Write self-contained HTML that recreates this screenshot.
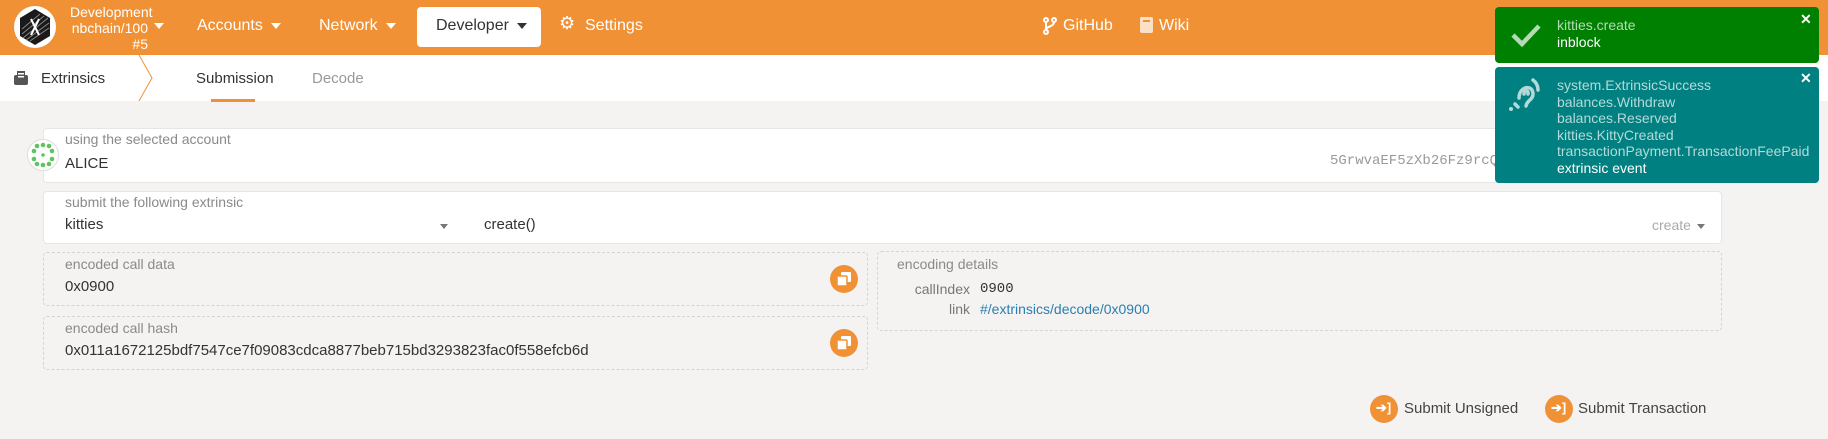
<!DOCTYPE html>
<html><head><meta charset="utf-8"><style>
*{box-sizing:border-box;margin:0;padding:0}
body{width:1828px;height:439px;overflow:hidden;background:#f4f3f2;font-family:"Liberation Sans",sans-serif;color:#4e4e4e;position:relative}
.a{position:absolute;white-space:nowrap}
.top{position:absolute;left:0;top:0;width:1828px;height:55px;background:#f19135}
.nav{color:#fff;font-size:16px}
.sub{position:absolute;left:0;top:55px;width:1828px;height:46px;background:#fff}
.box{position:absolute;background:#fff;border:1px solid #e6e6e6;border-radius:4px}
.dash{position:absolute;border:1px dashed #d4d4d4;border-radius:4px}
.lbl{font-size:14px;color:#8a8a8a}
.val{font-size:15px;color:#333}
.mono{font-family:"Liberation Mono",monospace}
.btn{position:absolute;width:28px;height:28px;border-radius:50%;background:#f19135}
.tri{display:inline-block;width:0;height:0;border-left:5px solid transparent;border-right:5px solid transparent;border-top:6px solid currentColor;vertical-align:middle;margin-left:8px}
</style></head><body>
<div class="top"></div>
<svg class="a" style="left:14px;top:6px" width="42" height="42" viewBox="0 0 42 42"><circle cx="21" cy="21" r="21" fill="#fff"/><polygon points="21,3 36,12 36,30 21,39 6,30 6,12" fill="#1a1a1a"/><g stroke="#888" stroke-width="1"><line x1="8" y1="28" x2="30" y2="10"/><line x1="9" y1="32" x2="34" y2="12"/><line x1="12" y1="34" x2="35" y2="17"/><line x1="16" y1="35" x2="35" y2="22"/><line x1="8" y1="23" x2="26" y2="8"/></g><path d="M17 13 L25 29 M25 13 L17 29" stroke="#fff" stroke-width="2"/></svg>
<div class="a nav" style="left:70px;top:4px;font-size:14px;line-height:16px;text-align:right;width:78px">Development<br>nbchain/100<br>#5</div>
<div class="a nav" style="left:150px;top:17px;font-size:14px"><span class="tri" style="margin-left:4px"></span></div>
<div class="a nav" style="left:197px;top:17px">Accounts<span class="tri"></span></div>
<div class="a nav" style="left:319px;top:17px">Network<span class="tri"></span></div>
<div class="a" style="left:417px;top:7px;width:124px;height:40px;background:#fff;border-radius:4px"></div>
<div class="a" style="left:436px;top:17px;font-size:16px;color:#333">Developer<span class="tri"></span></div>
<div class="a nav" style="left:559px;top:13px;font-size:18px">⚙</div>
<div class="a nav" style="left:585px;top:17px">Settings</div>
<svg class="a" style="left:1043px;top:17px" width="14" height="18" viewBox="0 0 14 18"><g fill="none" stroke="#fff" stroke-width="2"><circle cx="3" cy="3" r="2"/><circle cx="11" cy="3" r="2"/><circle cx="3" cy="15" r="2"/><path d="M3 5v8M11 5c0 5-8 4-8 8"/></g></svg>
<div class="a nav" style="left:1063px;top:17px">GitHub</div>
<svg class="a" style="left:1140px;top:17px" width="13" height="16"><rect x="0" y="0" width="13" height="16" rx="2" fill="#fbe0c6"/><rect x="3" y="3" width="7" height="2" fill="#f19135"/></svg>
<div class="a nav" style="left:1159px;top:17px">Wiki</div>

<div class="sub"></div>
<svg class="a" style="left:14px;top:71px" width="14" height="14"><rect x="0" y="4" width="14" height="10" rx="2" fill="#555"/><rect x="3" y="0" width="8" height="8" fill="#555"/><rect x="4" y="2" width="6" height="1.5" fill="#fff"/><rect x="4" y="5" width="6" height="1.5" fill="#fff"/></svg>
<div class="a" style="left:41px;top:70px;font-size:15px;color:#333">Extrinsics</div>
<svg class="a" style="left:138px;top:55px" width="16" height="46"><path d="M1 0 L14 23 L1 46" fill="none" stroke="#f19135" stroke-width="1"/></svg>
<div class="a" style="left:196px;top:70px;font-size:15px;color:#333">Submission</div>
<div class="a" style="left:211px;top:99px;width:44px;height:3px;background:#f19135"></div>
<div class="a" style="left:312px;top:70px;font-size:15px;color:#999">Decode</div>

<div class="box" style="left:43px;top:128px;width:1690px;height:55px"></div>
<svg class="a" style="left:27px;top:139px" width="32" height="32"><circle cx="16" cy="16" r="15.5" fill="#fff" stroke="#ddd"/><g fill="#5ec45e"><circle cx="10" cy="7" r="2.3"/><circle cx="16" cy="6" r="2.3"/><circle cx="22" cy="7" r="2.3"/><circle cx="7" cy="12" r="2.3"/><circle cx="25" cy="12" r="2.3"/><circle cx="7" cy="20" r="2.3"/><circle cx="25" cy="20" r="2.3"/><circle cx="10" cy="25" r="2.3"/><circle cx="16" cy="26" r="2.3"/><circle cx="22" cy="25" r="2.3"/><circle cx="16" cy="16" r="1.8"/></g></svg>
<div class="a lbl" style="left:65px;top:131px">using the selected account</div>
<div class="a val" style="left:65px;top:155px">ALICE</div>
<div class="a mono" style="left:1330px;top:153px;font-size:14px;color:#999">5GrwvaEF5zXb26Fz9rcQpDWS57CtERHpNehXCPcNoHGKutQY</div>

<div class="box" style="left:43px;top:191px;width:1679px;height:53px"></div>
<div class="a lbl" style="left:65px;top:194px">submit the following extrinsic</div>
<div class="a val" style="left:65px;top:216px">kitties</div>
<div class="a" style="left:440px;top:221px;color:#777;font-size:10px"><span class="tri" style="border-width:5px 4px 0 4px;margin:0"></span></div>
<div class="a val" style="left:484px;top:216px">create()</div>
<div class="a" style="left:1652px;top:217px;font-size:14px;color:#aaa">create<span class="tri" style="border-width:5px 4px 0 4px;margin-left:6px;color:#777"></span></div>

<div class="dash" style="left:43px;top:252px;width:825px;height:54px"></div>
<div class="a lbl" style="left:65px;top:256px">encoded call data</div>
<div class="a val" style="left:65px;top:278px">0x0900</div>
<div class="btn" style="left:830px;top:265px"></div>
<svg class="a" style="left:837px;top:272px" width="14" height="14"><rect x="4" y="0" width="10" height="10" rx="1" fill="#fff"/><rect x="0" y="4" width="10" height="10" rx="1" fill="#fff" stroke="#f19135" stroke-width="1.5"/></svg>

<div class="dash" style="left:43px;top:316px;width:825px;height:54px"></div>
<div class="a lbl" style="left:65px;top:320px">encoded call hash</div>
<div class="a val" style="left:65px;top:342px">0x011a1672125bdf7547ce7f09083cdca8877beb715bd3293823fac0f558efcb6d</div>
<div class="btn" style="left:830px;top:329px"></div>
<svg class="a" style="left:837px;top:336px" width="14" height="14"><rect x="4" y="0" width="10" height="10" rx="1" fill="#fff"/><rect x="0" y="4" width="10" height="10" rx="1" fill="#fff" stroke="#f19135" stroke-width="1.5"/></svg>

<div class="dash" style="left:877px;top:251px;width:845px;height:80px"></div>
<div class="a lbl" style="left:897px;top:256px">encoding details</div>
<div class="a lbl" style="left:870px;top:281px;width:100px;text-align:right;color:#777">callIndex</div>
<div class="a mono" style="left:980px;top:281px;font-size:14px;color:#333">0900</div>
<div class="a lbl" style="left:870px;top:301px;width:100px;text-align:right;color:#777">link</div>
<div class="a" style="left:980px;top:301px;font-size:14px;color:#2a7fb0">#/extrinsics/decode/0x0900</div>

<div class="btn" style="left:1370px;top:395px"></div>
<div class="a" style="left:1376px;top:400px;color:#fff;font-size:13px;font-weight:bold">➔]</div>
<div class="a" style="left:1404px;top:400px;font-size:15px;color:#444">Submit Unsigned</div>
<div class="btn" style="left:1545px;top:395px"></div>
<div class="a" style="left:1551px;top:400px;color:#fff;font-size:13px;font-weight:bold">➔]</div>
<div class="a" style="left:1578px;top:400px;font-size:15px;color:#444">Submit Transaction</div>

<div class="a" style="left:1495px;top:7px;width:324px;height:56px;background:#008000;border-radius:4px"></div>
<svg class="a" style="left:1510px;top:22px" width="32" height="26"><path d="M3 13 L12 22 L29 4" fill="none" stroke="#b4dbb4" stroke-width="4.5"/></svg>
<div class="a" style="left:1557px;top:17px;font-size:14px;line-height:17px;color:#b4dbb4">kitties.create<br><span style="color:#fff">inblock</span></div>
<div class="a" style="left:1800px;top:11px;color:#fff;font-size:14px;font-weight:bold">✕</div>

<div class="a" style="left:1495px;top:67px;width:324px;height:116px;background:#008080;border-radius:4px;overflow:hidden"></div>
<svg class="a" style="left:1507px;top:76px" width="34" height="36" viewBox="0 0 34 36"><g fill="none" stroke="#b4d9d9" stroke-width="3.5" stroke-linecap="round"><path d="M12 22 C12 10 26 8 26 18 C26 24 20 24 19 30"/><path d="M17 18 C17 14 22 14 21 18"/><path d="M26 4 C30 7 31 11 31 14"/><path d="M8 28 L11 31"/></g><circle cx="4" cy="33" r="2" fill="#b4d9d9"/></svg>
<div class="a" style="left:1557px;top:77px;width:260px;overflow:hidden;font-size:14px;line-height:16.5px;color:#b4d9d9">system.ExtrinsicSuccess<br>balances.Withdraw<br>balances.Reserved<br>kitties.KittyCreated<br>transactionPayment.TransactionFeePaid<br><span style="color:#fff">extrinsic event</span></div>
<div class="a" style="left:1800px;top:70px;color:#fff;font-size:14px;font-weight:bold">✕</div>
</body></html>
